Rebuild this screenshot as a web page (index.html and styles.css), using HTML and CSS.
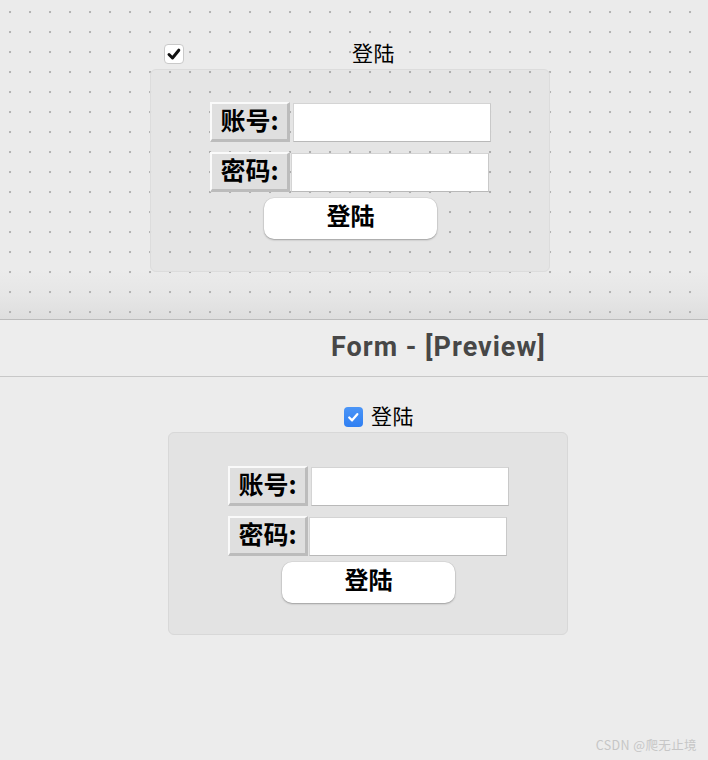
FILE: index.html
```html
<!DOCTYPE html>
<html lang="zh">
<head>
<meta charset="utf-8">
<title>Form - [Preview]</title>
<link rel="stylesheet" href="styles.css">
</head>
<body>
  <section class="designer">
    <div class="widget widget--design">
      <div class="check-row">
        <span class="checkbox checkbox--design">
          <svg viewBox="0 0 20 20" width="20" height="20"><path d="M5 10.5 L8.5 14 L14.8 6.2" fill="none" stroke="#111" stroke-width="3" stroke-linecap="round" stroke-linejoin="round"/></svg>
        </span>
        <span class="check-text check-text--design">登陆</span>
      </div>
      <div class="frame">
        <div class="row">
          <span class="label">账号:</span>
          <span class="input input--first"></span>
        </div>
        <div class="row row--second">
          <span class="label">密码:</span>
          <span class="input input--second"></span>
        </div>
        <div class="btn">登陆</div>
      </div>
    </div>
  </section>
  <header class="titlebar">
    <h1 class="title">Form - [Preview]</h1>
  </header>
  <section class="preview">
    <div class="widget widget--preview">
      <div class="check-row check-row--preview">
        <span class="checkbox checkbox--preview">
          <svg viewBox="0 0 20 20" width="19" height="20"><path d="M5.5 10.5 L8.5 13.5 L14 7" fill="none" stroke="#fff" stroke-width="2.4" stroke-linecap="round" stroke-linejoin="round"/></svg>
        </span>
        <span class="check-text">登陆</span>
      </div>
      <div class="frame frame--preview">
        <div class="row">
          <span class="label">账号:</span>
          <span class="input input--first"></span>
        </div>
        <div class="row row--second">
          <span class="label">密码:</span>
          <span class="input input--second"></span>
        </div>
        <div class="btn">登陆</div>
      </div>
    </div>
    <div class="watermark">CSDN @爬无止境</div>
  </section>
</body>
</html>
```

FILE: styles.css
```css
* { box-sizing: border-box; }

html, body {
  margin: 0;
  padding: 0;
}

body {
  width: 708px;
  height: 760px;
  overflow: hidden;
  background: #ececec;
  font-family: "Noto Sans CJK SC", "Noto Sans", sans-serif;
  color: #000;
}

/* ---------- designer canvas ---------- */
.designer {
  height: 320px;
  padding: 44px 0 0 150px;
  border-bottom: 1px solid #bcbcbc;
  background-color: #ebebeb;
  background-image:
    radial-gradient(circle at 1px 1px, #b3b3b3 1.1px, rgba(179,179,179,0) 1.6px),
    linear-gradient(to bottom, #ebebeb 0px, #ebebeb 270px, #e6e6e6 295px, #dedede 319px);
  background-size: 20px 20px, 100% 100%;
  background-position: 9px 11px, 0 0;
  background-repeat: repeat, no-repeat;
}

.widget {
  width: 400px;
}

.check-row {
  display: flex;
  align-items: center;
  height: 20px;
  margin-bottom: 5px;
  padding-left: 14px;
}

.check-row--preview {
  padding-left: 176px;
  margin-bottom: 5px;
}

.checkbox {
  display: block;
  width: 20px;
  height: 20px;
  flex: none;
}

.checkbox svg { display: block; }

.checkbox--design {
  background: #fff;
  border: 1px solid #c9c9c9;
  border-radius: 4px;
}

.checkbox--design svg { margin: -1px; }

.checkbox--preview {
  width: 19px;
  background: linear-gradient(#4b95f7, #2f7ff2);
  border-radius: 4px;
}

.check-text {
  font-size: 21px;
  line-height: 20px;
  margin-left: 8px;
  letter-spacing: 0.5px;
  padding-bottom: 5px;
}

.check-text--design {
  margin-left: 168px;
}

.frame {
  height: 203px;
  border: 1px solid #dcdcdc;
  border-radius: 6px;
  background: rgba(0, 0, 0, 0.025);
  padding: 32px 0 0 59px;
}

.frame--preview {
  background: #e3e3e3;
  border-color: #d8d8d8;
  padding-top: 33px;
}

.row {
  display: flex;
  align-items: flex-start;
}

.row--second {
  margin-top: 10px;
}

.label {
  display: flex;
  align-items: center;
  justify-content: center;
  width: 80px;
  height: 40px;
  background: #dfdfdf;
  border-top: 2px solid #fafafa;
  border-left: 2px solid #fafafa;
  border-right: 3px solid #bcbcbc;
  border-bottom: 3px solid #bcbcbc;
  font-size: 25px;
  font-weight: 700;
  line-height: 1;
  padding-bottom: 4px;
}

.input {
  display: block;
  width: 198px;
  height: 39px;
  margin-top: 1px;
  background: #fff;
  border: 1px solid #d4d4d4;
  border-bottom-color: #b9b9b9;
  border-right-color: #c9c9c9;
}

.input--first { margin-left: 3px; }
.input--second { margin-left: 1px; }

.btn {
  width: 173px;
  height: 41px;
  margin: 6px 0 0 54px;
  background: #fff;
  border-radius: 10px;
  box-shadow: 0 1px 2px rgba(0, 0, 0, 0.28), 0 0 0 0.5px rgba(0, 0, 0, 0.08);
  display: flex;
  align-items: center;
  justify-content: center;
  font-size: 24px;
  font-weight: 700;
  line-height: 1;
  padding-bottom: 7px;
}

/* ---------- title bar ---------- */
.titlebar {
  height: 57px;
  background: #ededed;
  border-bottom: 1px solid #c8c8c8;
  display: flex;
  align-items: center;
  padding-left: 331px;
}

.title {
  margin: 0;
  font-family: Roboto, "Noto Sans", sans-serif;
  font-size: 27px;
  font-weight: 700;
  color: #474747;
  letter-spacing: 1px;
  line-height: 1;
  padding-bottom: 2px;
}

/* ---------- preview ---------- */
.preview {
  height: 383px;
  padding: 30px 0 0 168px;
  position: relative;
  background: #ececec;
}

.watermark {
  position: absolute;
  right: 11px;
  bottom: 6px;
  font-size: 12.5px;
  letter-spacing: 0.4px;
  color: #c6c6c6;
  font-family: "Noto Sans CJK SC", "Noto Sans", sans-serif;
}
```
